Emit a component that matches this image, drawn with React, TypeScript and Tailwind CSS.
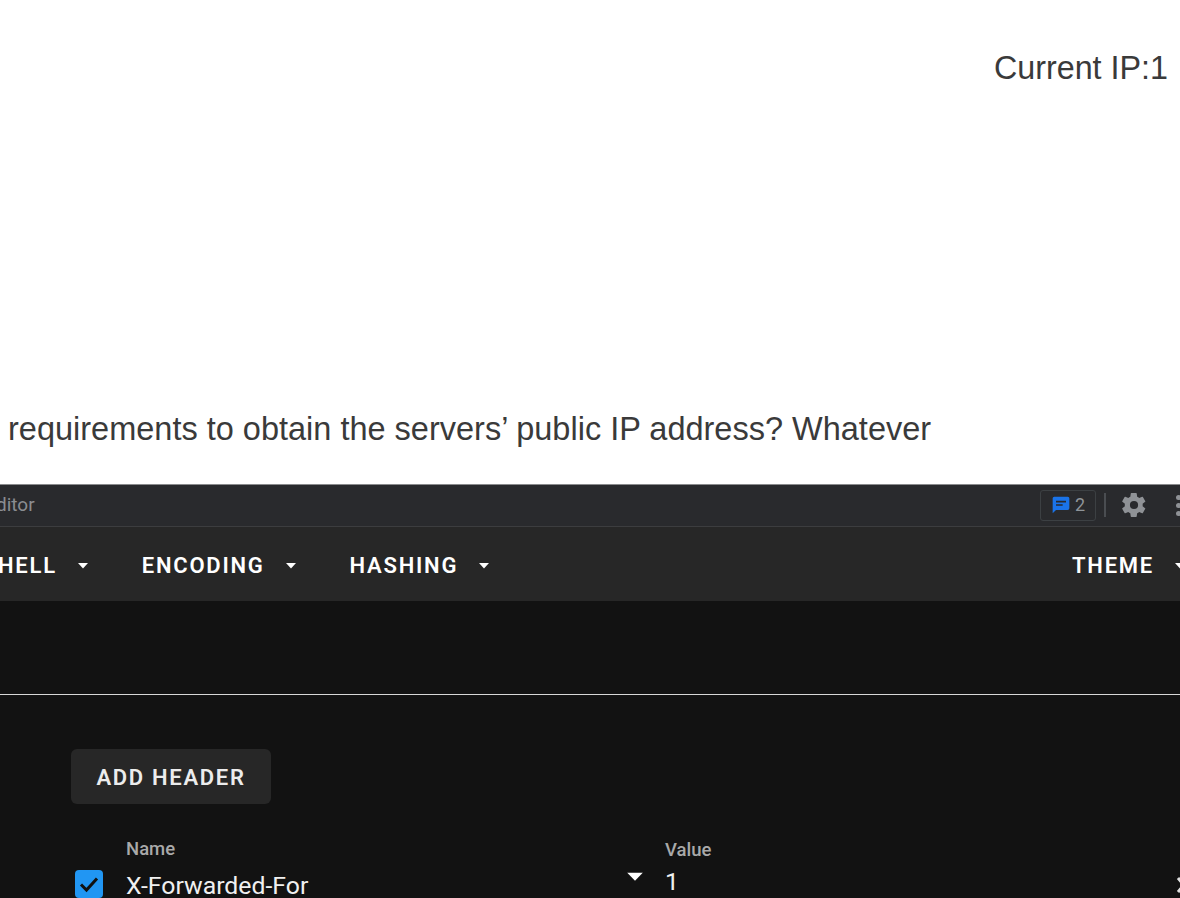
const Caret = ({ className = "" }: { className?: string }) => (
  <svg width="12" height="6" viewBox="0 0 12 6" className={"shrink-0 " + className}>
    <path d="M1 0h10L6 5.5z" fill="#fff" />
  </svg>
);

const Menu = ({ label, className = "" }: { label: string; className?: string }) => (
  <div className={"flex items-center shrink-0 gap-[20px] " + className}>
    <span className="text-[22px] leading-none font-semibold tracking-[1.75px] text-white">{label}</span>
    <Caret />
  </div>
);

export default function App() {
  return (
    <div className="w-[1180px] h-[898px] overflow-hidden bg-white flex flex-col font-['Roboto',sans-serif]">
      <section className="h-[484px] shrink-0 flex flex-col font-['Liberation_Sans',sans-serif] text-[#3a3a3a]">
        <div className="pt-[49px] pr-[12px] text-right text-[32.3px] leading-[38px]">Current IP:1</div>
        <div className="mt-[323px] pl-[8px] text-[32.5px] leading-[38px] whitespace-nowrap">
          requirements to obtain the servers’ public IP address? Whatever
        </div>
      </section>

      <div className="h-[42px] shrink-0 bg-[#292a2d] border-t border-[#8a8b8d] flex items-center">
        <span className="-ml-[4px] text-[19px] text-[#8a8d91]">ditor</span>
        <div className="ml-auto flex items-center -mr-[4px]">
          <div className="w-[56px] h-[31px] -mt-[1px] rounded-[3px] border border-[#3c4043] flex items-center justify-center gap-[4px]">
            <svg width="20" height="20" viewBox="0 0 24 24">
              <path d="M2 4a2 2 0 0 1 2-2h16a2 2 0 0 1 2 2v12a2 2 0 0 1-2 2H6l-4 4z" fill="#1a73e8" />
              <path d="M6 7h12v2H6zM6 11h8v2H6z" fill="#292a2d" />
            </svg>
            <span className="text-[18px] leading-none text-[#8f9499]">2</span>
          </div>
          <div className="w-[2px] h-[24px] -mt-[1px] bg-[#4a4d51] ml-[8px]" />
          <svg width="28" height="28" viewBox="0 0 24 24" className="ml-[14px] -mt-[2px]">
            <path
              fill="#8f9296"
              d="M19.4 13c.04-.32.06-.66.06-1s-.02-.68-.07-1l2.16-1.68a.5.5 0 0 0 .12-.64l-2.05-3.54a.5.5 0 0 0-.62-.22l-2.55 1.02a7.4 7.4 0 0 0-1.73-1l-.38-2.71a.5.5 0 0 0-.5-.43h-4.1a.5.5 0 0 0-.5.43l-.38 2.71c-.62.26-1.2.6-1.73 1L4.58 4.92a.5.5 0 0 0-.62.22L1.91 8.68a.5.5 0 0 0 .12.64L4.19 11c-.05.32-.09.66-.09 1s.02.68.07 1l-2.16 1.68a.5.5 0 0 0-.12.64l2.05 3.54c.13.22.39.3.62.22l2.55-1.02c.53.4 1.11.74 1.73 1l.38 2.71c.05.25.25.43.5.43h4.1c.25 0 .46-.18.5-.43l.38-2.71c.62-.26 1.2-.6 1.73-1l2.55 1.02c.23.08.49 0 .62-.22l2.05-3.54a.5.5 0 0 0-.12-.64zM12 15.5a3.5 3.5 0 1 1 0-7 3.5 3.5 0 0 1 0 7z"
            />
          </svg>
          <div className="ml-[28px] -mt-[1px] w-[8px] flex flex-col gap-[3px]">
            <span className="block w-[5px] h-[5px] rounded-full bg-[#8f9296]" />
            <span className="block w-[5px] h-[5px] rounded-full bg-[#8f9296]" />
            <span className="block w-[5px] h-[5px] rounded-full bg-[#8f9296]" />
          </div>
        </div>
      </div>

      <nav className="h-[75px] shrink-0 bg-[#272727] border-t border-[#3c3d3f] pt-[3px] flex items-center">
        <Menu label="HELL" className="-ml-[2px]" />
        <Menu label="ENCODING" className="ml-[53px]" />
        <Menu label="HASHING" className="ml-[53px]" />
        <Menu label="THEME" className="ml-auto -mr-[6px]" />
      </nav>

      <main className="flex-1 bg-[#121212] flex flex-col min-h-0">
        <div className="h-[94px] shrink-0 border-b border-[#d8d8d8]" />
        <div className="pl-[71px] pt-[54px]">
          <button className="w-[200px] h-[55px] pt-[2px] rounded-[6px] bg-[#272727] text-[22px] font-semibold tracking-[1.7px] text-[#ececec]">
            ADD HEADER
          </button>
        </div>
        <div className="flex pt-[34px] pl-[75px]">
          <div className="w-[28px] h-[28px] mt-[32px] rounded-[4px] bg-[#2196f3] flex items-center justify-center shrink-0">
            <svg width="24" height="24" viewBox="0 0 24 24">
              <path d="M4 12.5 9.5 18 20 6.5" fill="none" stroke="#111" strokeWidth="3" />
            </svg>
          </div>
          <div className="w-[523px] ml-[23px] shrink-0 relative">
            <div className="text-[18.5px] leading-[22px] font-medium text-[#a9a9a9]">Name</div>
            <div className="mt-[12px] text-[24.8px] leading-[28px] text-[#f0f0f0] whitespace-nowrap">X-Forwarded-For</div>
            <Caret className="absolute right-[8px] top-[36px] scale-x-[1.6] scale-y-[1.5]" />
          </div>
          <div className="ml-[16px] shrink-0">
            <div className="text-[18.5px] leading-[22px] font-medium text-[#a9a9a9] mt-[1px]">Value</div>
            <div className="mt-[7px] text-[24.8px] leading-[28px] text-[#f0f0f0]">1</div>
          </div>
          <svg width="16" height="16" viewBox="0 0 16 16" className="ml-auto -mr-[12px] mt-[39px] shrink-0">
            <path d="M2 1l12 14M14 1 2 15" fill="none" stroke="#e0e0e0" strokeWidth="3" />
          </svg>
        </div>
      </main>
    </div>
  );
}
